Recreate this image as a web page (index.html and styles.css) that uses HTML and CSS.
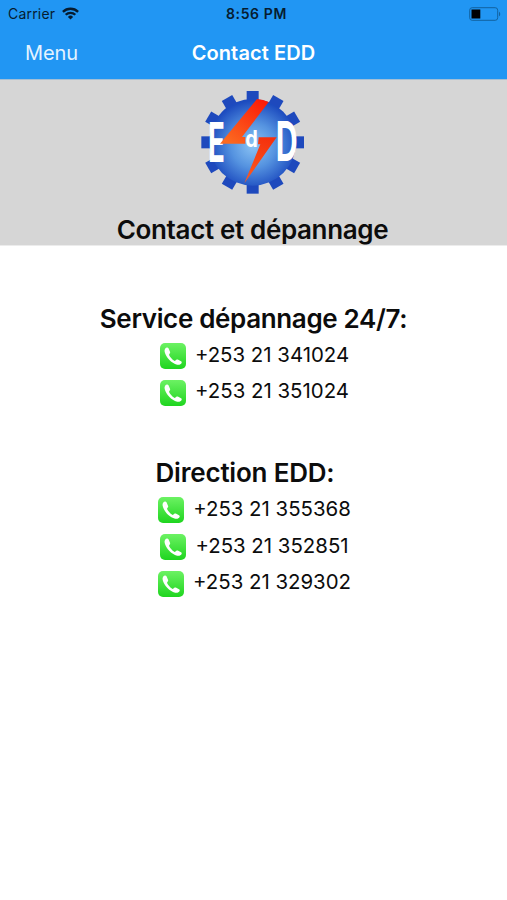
FILE: index.html
```
<!DOCTYPE html>
<html lang="fr">
<head>
  <meta charset="utf-8">
  <title>Contact EDD</title>
  <link rel="stylesheet" href="styles.css">
</head>
<body>
  <!-- shared shapes -->
  <svg class="defs" width="0" height="0">
    <defs>
      <linearGradient id="green" x1="0" y1="0" x2="0" y2="1">
        <stop offset="0" stop-color="#6cf263"/>
        <stop offset="1" stop-color="#1fd51f"/>
      </linearGradient>
      <symbol id="phone" viewBox="0 0 26 26">
        <rect width="26" height="26" rx="5" fill="url(#green)"/>
        <path fill="#fff" d="M6.800 4.500C5 5 4.200 6.900 4.700 9c1.300 5.500 6.600 11.200 12.500 12.700 1.900.5 3.700-.2 4.400-1.700.3-.7.100-1.300-.6-1.700l-3.200-1.700c-.6-.3-1.200-.2-1.700.3l-.7.700c-.4.400-1 .4-1.500 0-2-1.400-3.700-3.400-4.700-5.300-.3-.5-.2-1 .2-1.400l.5-.6c.4-.5.400-1 .1-1.600L8.500 5.300C8.100 4.600 7.500 4.300 6.800 4.500z"/>
      </symbol>
      <rect id="tooth" x="170" y="27" width="36" height="34"/>
    </defs>
  </svg>

  <header class="topbar">
    <div class="status">
      <div class="carrier">
        <span>Carrier</span>
        <svg width="17" height="13" viewBox="0 0 17 13" fill="none" stroke="#061c30" stroke-width="2.300">
          <path d="M.9 4.900a10.800 10.800 0 0 1 15.200 0"/>
          <path d="M3.700 7.800a6.800 6.800 0 0 1 9.600 0"/>
          <path d="M8.500 12.500L5.900 9.900a3.700 3.700 0 0 1 5.200 0z" fill="#061c30" stroke="none"/>
        </svg>
      </div>
      <span class="time">8:56 PM</span>
      <svg class="battery" width="32" height="14" viewBox="0 0 32 14">
        <rect x=".7" y=".7" width="28" height="12.600" rx="2.500" fill="none" stroke="#12629f" stroke-width="1"/>
        <rect x="2.500" y="2.500" width="8.800" height="9" fill="#000"/>
        <path d="M30 4.700c1.600.6 1.600 4 0 4.600z" fill="#12629f"/>
      </svg>
    </div>
    <nav class="nav">
      <a class="menu">Menu</a>
      <h1>Contact EDD</h1>
    </nav>
  </header>

  <section class="banner">
    <svg class="logo" width="126" height="120" viewBox="0 0 378 360">
      <defs>
        <radialGradient id="blue" cx="190" cy="190" r="134" gradientUnits="userSpaceOnUse">
          <stop offset="0" stop-color="#8cc4f4"/>
          <stop offset=".5" stop-color="#5593e0"/>
          <stop offset="1" stop-color="#1c4bbf"/>
        </radialGradient>
        <linearGradient id="bolt1" x1="220" y1="55" x2="120" y2="185" gradientUnits="userSpaceOnUse">
          <stop offset="0" stop-color="#fb1a08"/>
          <stop offset="1" stop-color="#fc6a20"/>
        </linearGradient>
        <linearGradient id="bolt2" x1="230" y1="165" x2="180" y2="300" gradientUnits="userSpaceOnUse">
          <stop offset="0" stop-color="#f5300c"/>
          <stop offset="1" stop-color="#fb5a20"/>
        </linearGradient>
      </defs>
      <g fill="#1e49bd">
        <use href="#tooth"/>
        <use href="#tooth" transform="rotate(30 188 181)"/>
        <use href="#tooth" transform="rotate(60 188 181)"/>
        <use href="#tooth" transform="rotate(90 188 181)"/>
        <use href="#tooth" transform="rotate(120 188 181)"/>
        <use href="#tooth" transform="rotate(150 188 181)"/>
        <use href="#tooth" transform="rotate(180 188 181)"/>
        <use href="#tooth" transform="rotate(210 188 181)"/>
        <use href="#tooth" transform="rotate(240 188 181)"/>
        <use href="#tooth" transform="rotate(270 188 181)"/>
        <use href="#tooth" transform="rotate(300 188 181)"/>
        <use href="#tooth" transform="rotate(330 188 181)"/>
      </g>
      <circle cx="188" cy="181" r="130" fill="url(#blue)"/>
      <g class="letters">
        <text transform="translate(54 241) scale(.5 1)" font-size="166">E</text>
        <text transform="translate(257 238) scale(.55 1)" font-size="166">D</text>
      </g>
      <path d="M201 51Q220 53 236 60L156 165H166V185H90z" fill="url(#bolt1)"/>
      <path d="M206 166H260L163 304L211 187H204z" fill="url(#bolt2)"/>
      <g class="letters">
        <text transform="translate(166 195) scale(.88 1)" font-size="68">d</text>
      </g>
    </svg>
    <h2>Contact et dépannage</h2>
  </section>

  <main>
    <section class="group">
      <h2>Service dépannage 24/7:</h2>
      <a class="phone"><svg><use href="#phone"/></svg><span>+253 21 341024</span></a>
      <a class="phone"><svg><use href="#phone"/></svg><span>+253 21 351024</span></a>
    </section>
    <section class="group direction">
      <h2>Direction EDD:</h2>
      <a class="phone"><svg><use href="#phone"/></svg><span>+253 21 355368</span></a>
      <a class="phone"><svg><use href="#phone"/></svg><span>+253 21 352851</span></a>
      <a class="phone"><svg><use href="#phone"/></svg><span>+253 21 329302</span></a>
    </section>
  </main>
</body>
</html>
```
FILE: styles.css
```
body {
  margin: 0;
  background-color: #fff;
  color: #0c0c0c;
  font-family: Inter, "Liberation Sans", sans-serif;
}

.defs {
  position: absolute;
}

h1, h2 {
  margin: 0;
  font-weight: 600;
  white-space: nowrap;
}

.topbar {
  height: 80px;
  background-color: #2196f3;
  border-bottom: 1px solid #a3bfd6;
  box-sizing: border-box;
}

.status {
  display: grid;
  grid-template-columns: 1fr auto 1fr;
  align-items: center;
  height: 27px;
  padding: 0 6px 0 8px;
  color: #061c30;
  font-size: 14px;
}

.carrier {
  display: flex;
  align-items: center;
  gap: 7px;
  letter-spacing: 0.2px;
}

.time {
  margin-left: 4px;
  font-size: 14px;
  font-weight: 600;
  letter-spacing: 0.6px;
}

.battery {
  justify-self: end;
}

.nav {
  display: grid;
  grid-template-columns: 1fr auto 1fr;
  align-items: center;
  height: 51px;
  color: #fff;
}

.menu {
  padding-left: 25px;
  font-size: 20px;
  letter-spacing: -0.1px;
  color: #e4f3ff;
}

h1 {
  font-size: 20px;
  letter-spacing: 0.1px;
}

.banner {
  display: flex;
  flex-direction: column;
  align-items: center;
  height: 165px;
  background-color: #d6d6d6;
  border-bottom: 1px solid #ececec;
}

.logo {
  margin-top: 2px;
  margin-right: 1px;
  flex-shrink: 0;
}

.letters {
  fill: #fff;
  font-family: Inter, "Liberation Sans", sans-serif;
  font-weight: 700;
}

h2 {
  font-size: 26px;
  line-height: 36px;
  letter-spacing: -0.35px;
}

.banner h2 {
  margin-top: 10px;
  margin-right: 2px;
}

main {
  padding-top: 55px;
}

.group {
  display: flex;
  flex-direction: column;
  align-items: center;
}

.group h2 {
  margin-bottom: 1px;
}

.direction {
  margin-top: 44px;
}

.direction h2 {
  margin-right: 17px;
  letter-spacing: -0.2px;
}

.phone {
  display: flex;
  align-items: center;
  gap: 9px;
  height: 36.6px;
  margin-left: 2px;
  font-size: 20.4px;
}

.phone svg {
  width: 26px;
  height: 26px;
}

.phone span {
  margin-top: -4px;
}
```
